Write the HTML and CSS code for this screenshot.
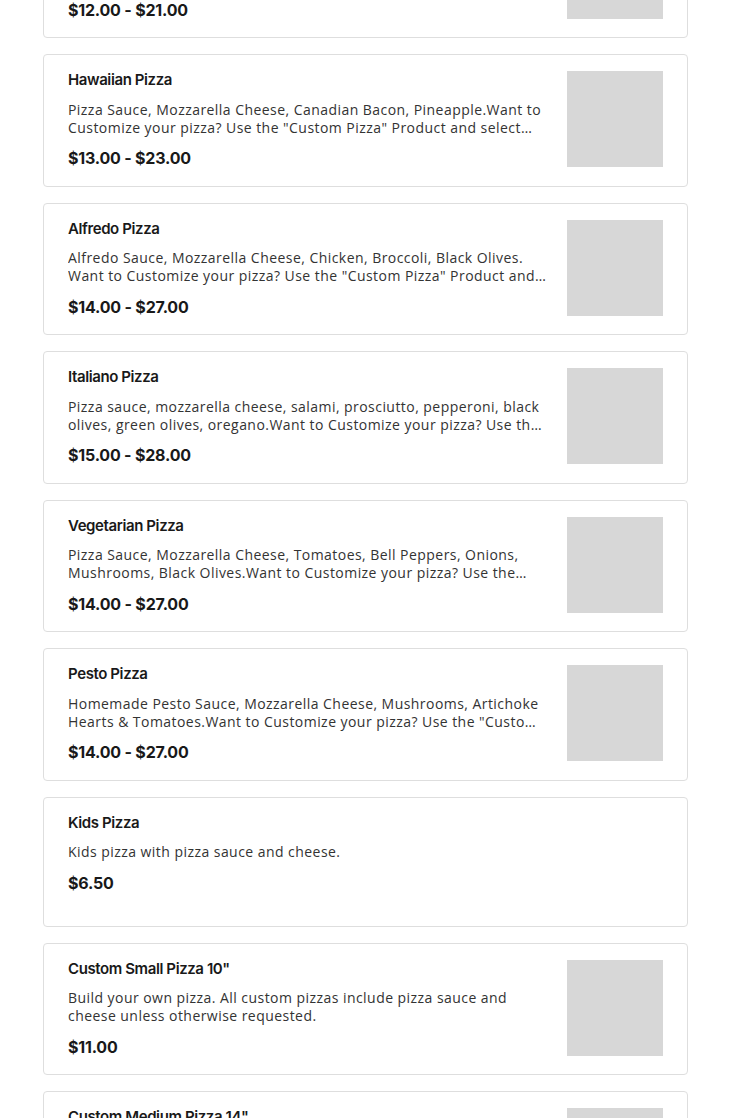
FILE: index.html
```html
<!DOCTYPE html>
<html lang="en">
<head>
<meta charset="utf-8">
<title>Pizza Menu</title>
<link rel="stylesheet" href="styles.css">
</head>
<body>
<main class="menu">
  <article class="item">
    <div class="item-text">
      <h3 class="item-name">Cheese Pizza</h3>
      <p class="item-desc">Pizza Sauce, Mozzarella Cheese.Want to Customize your pizza? Use the "Custom Pizza" Product and select your toppings.</p>
      <div class="item-price">$12.00 - $21.00</div>
    </div>
    <div class="item-img"></div>
  </article>
  <article class="item">
    <div class="item-text">
      <h3 class="item-name">Hawaiian Pizza</h3>
      <p class="item-desc">Pizza Sauce, Mozzarella Cheese, Canadian Bacon, Pineapple.Want to Customize your pizza? Use the "Custom Pizza" Product and select your toppings.</p>
      <div class="item-price">$13.00 - $23.00</div>
    </div>
    <div class="item-img"></div>
  </article>
  <article class="item">
    <div class="item-text">
      <h3 class="item-name">Alfredo Pizza</h3>
      <p class="item-desc">Alfredo Sauce, Mozzarella Cheese, Chicken, Broccoli, Black Olives. Want to Customize your pizza? Use the "Custom Pizza" Product and select your toppings.</p>
      <div class="item-price">$14.00 - $27.00</div>
    </div>
    <div class="item-img"></div>
  </article>
  <article class="item">
    <div class="item-text">
      <h3 class="item-name">Italiano Pizza</h3>
      <p class="item-desc">Pizza sauce, mozzarella cheese, salami, prosciutto, pepperoni, black olives, green olives, oregano.Want to Customize your pizza? Use the "Custom Pizza" Product and select your toppings.</p>
      <div class="item-price">$15.00 - $28.00</div>
    </div>
    <div class="item-img"></div>
  </article>
  <article class="item">
    <div class="item-text">
      <h3 class="item-name">Vegetarian Pizza</h3>
      <p class="item-desc">Pizza Sauce, Mozzarella Cheese, Tomatoes, Bell Peppers, Onions, Mushrooms, Black Olives.Want to Customize your pizza? Use the "Custom Pizza" Product and select your toppings.</p>
      <div class="item-price">$14.00 - $27.00</div>
    </div>
    <div class="item-img"></div>
  </article>
  <article class="item">
    <div class="item-text">
      <h3 class="item-name">Pesto Pizza</h3>
      <p class="item-desc">Homemade Pesto Sauce, Mozzarella Cheese, Mushrooms, Artichoke Hearts &amp; Tomatoes.Want to Customize your pizza? Use the "Custom Pizza" Product and select your toppings.</p>
      <div class="item-price">$14.00 - $27.00</div>
    </div>
    <div class="item-img"></div>
  </article>
  <article class="item">
    <div class="item-text">
      <h3 class="item-name">Kids Pizza</h3>
      <p class="item-desc">Kids pizza with pizza sauce and cheese.</p>
      <div class="item-price">$6.50</div>
    </div>
  </article>
  <article class="item">
    <div class="item-text">
      <h3 class="item-name">Custom Small Pizza 10"</h3>
      <p class="item-desc">Build your own pizza. All custom pizzas include pizza sauce and cheese unless otherwise requested.</p>
      <div class="item-price">$11.00</div>
    </div>
    <div class="item-img"></div>
  </article>
  <article class="item">
    <div class="item-text">
      <h3 class="item-name">Custom Medium Pizza 14"</h3>
      <p class="item-desc">Build your own pizza. All custom pizzas include pizza sauce and cheese unless otherwise requested.</p>
      <div class="item-price">$15.00</div>
    </div>
    <div class="item-img"></div>
  </article>
</main>
</body>
</html>
```
FILE: styles.css
```css
* { box-sizing: border-box; }
html, body { margin: 0; padding: 0; background: #ffffff; }
body { overflow: hidden; }

.menu {
  display: flex;
  flex-direction: column;
  gap: 16px;
  padding: 0 42px 0 43px;
  margin-top: -94.5px;
}

.item {
  display: flex;
  align-items: flex-start;
  gap: 20px;
  min-height: 130px;
  padding: 16px 24px 16.5px;
  border: 1px solid #dedede;
  border-radius: 4px;
  background: #fff;
}

.item-text {
  flex: 1;
  min-width: 0;
}

.item-name {
  margin: 0;
  font-family: Inter, "Noto Sans", sans-serif;
  font-weight: 600;
  font-size: 15px;
  line-height: 18px;
  letter-spacing: -0.4px;
  color: #191919;
}

.item-desc {
  margin: 11.5px 0 0;
  font-family: "Open Sans", "Noto Sans", sans-serif;
  font-size: 14px;
  line-height: 18px;
  letter-spacing: 0.45px;
  color: #333333;
  display: -webkit-box;
  -webkit-line-clamp: 2;
  -webkit-box-orient: vertical;
  overflow: hidden;
}

.item-price {
  margin-top: 10.5px;
  font-family: Inter, "Noto Sans", sans-serif;
  font-weight: 700;
  font-size: 16px;
  line-height: 22px;
  letter-spacing: -0.2px;
  color: #191919;
}

.item-img {
  flex: 0 0 96px;
  width: 96px;
  height: 96px;
  background: #d7d7d7;
}
```
